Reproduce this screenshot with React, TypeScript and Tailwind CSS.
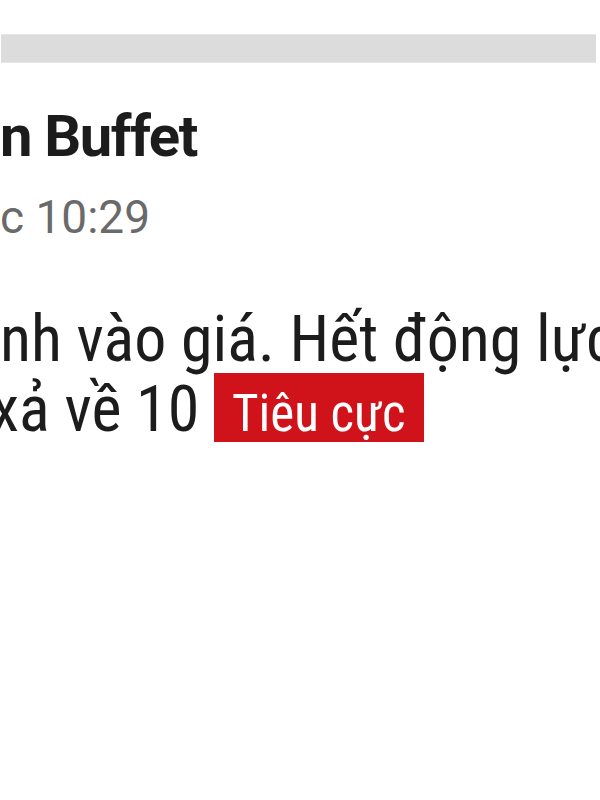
export default function App() {
  return (
    <div className="w-[600px] h-[800px] bg-white overflow-hidden font-['Roboto',sans-serif]">
      <div className="pt-[34px]">
        <div className="ml-[1px] w-[595px] h-[29px] bg-[#dcdcdc] border-y border-[#e6e6e6]" />
      </div>
      <div className="mt-[41px] whitespace-nowrap text-[58px] leading-[64px] font-bold tracking-[-1.4px] text-[#1c1c1c]">
        n Buffet
      </div>
      <div className="mt-[23px] whitespace-nowrap text-[46px] leading-[52px] text-[#6a6a6a]">c 10:29</div>
      <div className="mt-[63px] whitespace-nowrap font-['Roboto_Condensed',sans-serif] text-[64px] leading-[67px] text-[#1c1c1c]">
        <div>nh vào giá. Hết động lực</div>
        <div className="-ml-[9px]">
          xả về 10{' '}
          <span className="inline-block bg-[#d0121a] text-[51px] text-white leading-[51px] pt-[15px] pb-[3px] px-[18px]">
            Tiêu cực
          </span>
        </div>
      </div>
    </div>
  );
}
